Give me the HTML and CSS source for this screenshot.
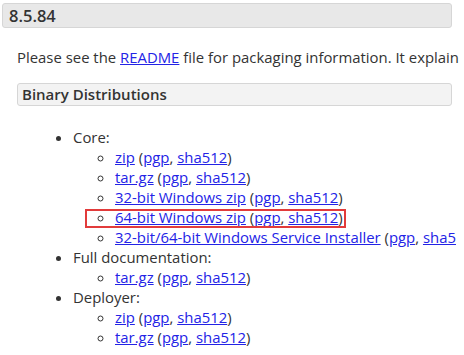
FILE: index.html
```html
<!DOCTYPE html>
<html lang="en">
<head>
  <meta charset="UTF-8">
  <title>Tomcat 8 Downloads</title>
  <link rel="stylesheet" href="styles.css">
</head>
<body>

  <div class="release">
    <h3 class="version">8.5.84</h3>

    <div class="section">
      <p>Please see the <a href="#">README</a> file for packaging information. It explain</p>

      <h3 class="dist-title">Binary Distributions</h3>

      <ul class="dist">
        <li>Core:
          <ul>
            <li><a href="#">zip</a> (<a href="#">pgp</a>, <a href="#">sha512</a>)</li>
            <li><a href="#">tar.gz</a> (<a href="#">pgp</a>, <a href="#">sha512</a>)</li>
            <li><a href="#">32-bit Windows zip</a> (<a href="#">pgp</a>, <a href="#">sha512</a>)</li>
            <li><span class="marked"><a href="#">64-bit Windows zip</a> (<a href="#">pgp</a>, <a href="#">sha512</a>)</span></li>
            <li><a href="#">32-bit/64-bit Windows Service Installer</a> (<a href="#">pgp</a>, <a href="#">sha5</a></li>
          </ul>
        </li>
        <li>Full documentation:
          <ul>
            <li><a href="#">tar.gz</a> (<a href="#">pgp</a>, <a href="#">sha512</a>)</li>
          </ul>
        </li>
        <li>Deployer:
          <ul>
            <li><a href="#">zip</a> (<a href="#">pgp</a>, <a href="#">sha512</a>)</li>
            <li><a href="#">tar.gz</a> (<a href="#">pgp</a>, <a href="#">sha512</a>)</li>
          </ul>
        </li>
      </ul>
    </div>
  </div>

</body>
</html>
```

FILE: styles.css
```css
* {
  box-sizing: border-box;
}

body {
  font-family: 'Open Sans', 'Noto Sans', sans-serif;
  font-size: 14.9px;
  color: #333;
  background: white;
  margin: 0;
  padding: 3px 0 0 2px;
  width: 464px;
  overflow: hidden;
}

.release {
  width: 450px;
}

h3 {
  margin: 0;
  font-weight: 600;
  border: 1px solid #d6d6d6;
  border-radius: 3px;
  white-space: nowrap;
}

.version {
  font-size: 16.5px;
  line-height: 23px;
  padding: 0 6px;
  background: #e8e8e8;
}

.section {
  padding-left: 15px;
}

p {
  margin: 19px 0 0 0;
  line-height: 20px;
  white-space: nowrap;
}

.dist-title {
  margin-top: 16px;
  font-size: 15px;
  line-height: 21px;
  padding: 0 4px;
  background: #f3f3f3;
}

a {
  color: #2323e6;
}

ul {
  margin: 0;
  padding-left: 56px;
  line-height: 20px;
  white-space: nowrap;
}

.dist {
  margin-top: 21px;
}

.dist ul {
  padding-left: 42px;
  list-style-type: circle;
}

.marked {
  display: inline-block;
  line-height: 12px;
  outline: 2px solid #e23b3b;
  padding: 0 1px 3px 28px;
  margin-left: -28px;
}
```
